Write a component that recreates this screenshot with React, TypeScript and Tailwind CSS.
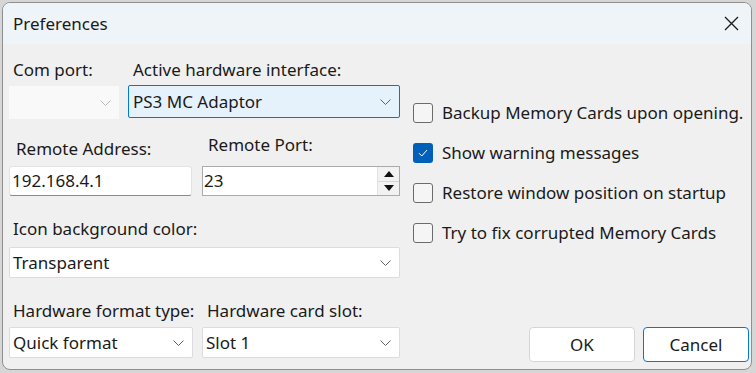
import React from "react"

function Chevron({ color = "#606060" }: { color?: string }) {
  return (
    <svg width="11" height="6" viewBox="0 0 11 6" fill="none">
      <path d="M0.5 0.5 L5.5 5.5 L10.5 0.5" stroke={color} strokeWidth="1" />
    </svg>
  )
}

function Combo({
  text,
  className,
  disabled,
}: {
  text?: string
  className: string
  disabled?: boolean
}) {
  return (
    <div className={`flex items-center justify-between pl-[3px] pr-[8px] shrink-0 ${className}`}>
      <span className="whitespace-nowrap">{text}</span>
      <Chevron color={disabled ? "#b8b8b8" : "#606060"} />
    </div>
  )
}

function Check({ label, checked }: { label: string; checked?: boolean }) {
  return (
    <div className="flex items-center h-[40px] gap-[9px] whitespace-nowrap">
      {checked ? (
        <div className="w-[20px] h-[20px] rounded-[3px] bg-[#005fb8] flex items-center justify-center">
          <svg width="10" height="8" viewBox="0 0 10 8" fill="none">
            <path d="M1 4.2 L3.8 7 L9 1" stroke="#ffffff" strokeWidth="1" />
          </svg>
        </div>
      ) : (
        <div className="w-[20px] h-[20px] rounded-[3px] border border-[#6b6b6b] bg-[#f5f5f5]" />
      )}
      <span>{label}</span>
    </div>
  )
}

export default function App() {
  return (
    <div
      className="w-[756px] h-[373px] bg-[#d6d6d6] pt-[2px] pl-[2px] overflow-hidden text-[17px] text-[#1a1a1a] leading-5 whitespace-nowrap"
      style={{ fontFamily: '"Noto Sans", "Open Sans", sans-serif' }}
    >
      <div className="w-[750px] h-[368px] rounded-[8px] border border-[#8f8f8f] bg-[#f0f0f0] overflow-hidden flex flex-col">
        <div className="h-[41px] shrink-0 bg-[#eff4f9] flex items-center justify-between pl-[10px]">
          <span>Preferences</span>
          <div className="w-[40px] flex items-center justify-center">
            <svg width="15" height="15" viewBox="0 0 15 15" fill="none">
              <path d="M1 1 L14 14 M14 1 L1 14" stroke="#1a1a1a" strokeWidth="1.3" />
            </svg>
          </div>
        </div>

        <div className="flex-1 min-h-0 flex">
          {/* left column */}
          <div className="w-[391px] ml-[6px] flex flex-col">
            <div className="flex gap-[9px] mt-[16px]">
              <div className="w-[110px] flex flex-col">
                <span className="pl-[4px]">Com port:</span>
                <Combo disabled className="mt-[6px] h-[33px] bg-[#f9f9f9]" />
              </div>
              <div className="w-[272px] flex flex-col">
                <span className="pl-[5px]">Active hardware interface:</span>
                <Combo
                  text="PS3 MC Adaptor"
                  className="mt-[5px] h-[33px] bg-[#e5f1fb] border border-[#0078d4] rounded-[2px] !pl-[4px]"
                />
              </div>
            </div>

            <div className="flex gap-[10px]">
              <div className="w-[183px] flex flex-col pt-[20px]">
                <span className="pl-[7px]">Remote Address:</span>
                <div className="mt-[7px] h-[30px] bg-white border border-[#e3e3e3] border-b-[#8a8a8a] rounded-[3px] flex items-center pl-[2px]">
                  192.168.4.1
                </div>
              </div>
              <div className="w-[198px] flex flex-col pt-[16px]">
                <span className="pl-[6px]">Remote Port:</span>
                <div className="mt-[11px] h-[30px] bg-white border border-[#ababab] flex items-center">
                  <span className="flex-1 pl-[1px]">23</span>
                  <div className="w-[22px] h-full flex flex-col border-l border-[#e3e3e3] bg-[#f0f0f0]">
                    <div className="flex-1 flex items-center justify-center border-b border-[#d6d6d6] bg-[#f2f2f2]">
                      <svg width="10" height="6" viewBox="0 0 10 6">
                        <path d="M5 0 L10 6 L0 6 Z" fill="#111" />
                      </svg>
                    </div>
                    <div className="flex-1 flex items-center justify-center bg-[#f2f2f2]">
                      <svg width="10" height="6" viewBox="0 0 10 6">
                        <path d="M0 0 L10 0 L5 6 Z" fill="#111" />
                      </svg>
                    </div>
                  </div>
                </div>
              </div>
            </div>

            <span className="pl-[4px] mt-[23px]">Icon background color:</span>
            <Combo
              text="Transparent"
              className="mt-[8px] h-[31px] bg-white border border-[#dcdcdc] rounded-[2px]"
            />

            <div className="flex gap-[9px] mt-[23px]">
              <div className="w-[184px] flex flex-col">
                <span className="pl-[4px]">Hardware format type:</span>
                <Combo
                  text="Quick format"
                  className="mt-[6px] h-[31px] bg-white border border-[#dcdcdc] rounded-[2px]"
                />
              </div>
              <div className="w-[198px] flex flex-col">
                <span className="pl-[5px]">Hardware card slot:</span>
                <Combo
                  text="Slot 1"
                  className="mt-[6px] h-[31px] bg-white border border-[#dcdcdc] rounded-[2px]"
                />
              </div>
            </div>
          </div>

          {/* right column */}
          <div className="flex-1 ml-[13px] pr-[2px] pb-[7px] flex flex-col">
            <div className="mt-[49px] flex flex-col">
              <Check label="Backup Memory Cards upon opening." />
              <Check label="Show warning messages" checked />
              <Check label="Restore window position on startup" />
              <Check label="Try to fix corrupted Memory Cards" />
            </div>
            <div className="mt-auto flex justify-end gap-[8px]">
              <button className="w-[106px] h-[35px] bg-white border border-[#d5d5d5] rounded-[4px]">
                OK
              </button>
              <button className="w-[106px] h-[35px] bg-white border border-[#0078d4] rounded-[4px]">
                Cancel
              </button>
            </div>
          </div>
        </div>
      </div>
    </div>
  )
}
